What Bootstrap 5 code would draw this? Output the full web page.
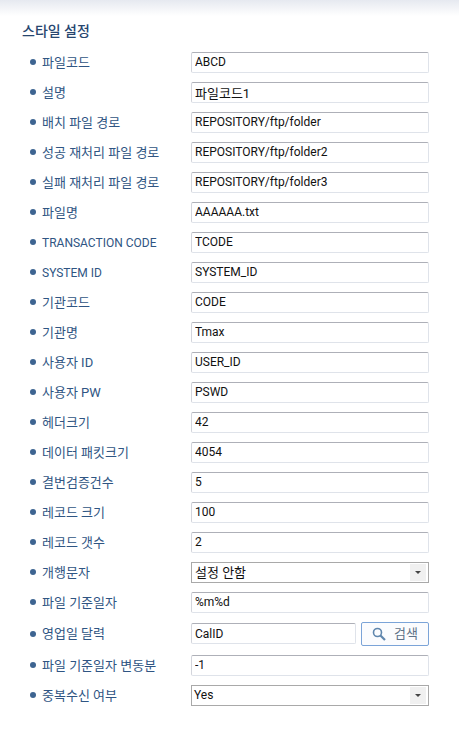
<!DOCTYPE html>
<html lang="ko">
<head>
<meta charset="utf-8">
<title>스타일 설정</title>
<link href="https://cdn.jsdelivr.net/npm/bootstrap@5.3.0/dist/css/bootstrap.min.css" rel="stylesheet">
<style>
html,body{height:100%;}
body{background:#fff;font-family:Roboto,"Noto Sans CJK KR",sans-serif;font-size:13px;overflow:hidden;}
.top-shade{height:16px;background:linear-gradient(#e6e9f0,#fff);}
.panel-head{margin:7px 0 0 22px;height:24px;line-height:17px;font-size:14px;font-weight:500;color:#27466f;}
.set-list{margin:0;padding:0 30px;list-style:none;}
.set-row{height:30px;display:flex;align-items:center;}
.set-row-tall{height:33px;}
.dot{width:6px;height:6px;border-radius:50%;background:#3d6491;flex:none;margin-right:6px;}
.set-label{width:149px;flex:none;color:#2f5583;font-size:13px;line-height:20px;padding-top:1px;white-space:nowrap;}
.set-label-latin{font-size:12px;}
.field{height:21px;min-height:21px;width:238px;padding:0 3px;border:1px solid #dfe3ea;border-top-color:#aeb0b8;border-left-color:#d3d5dc;border-radius:2px;font-family:Roboto,"Noto Sans CJK KR",sans-serif;font-size:12px;line-height:19px;color:#111;box-shadow:none;}
.field-ko{font-size:13px;}
.chooser{width:239px;height:21px;border:1px solid #a9a9a9;border-radius:0;padding:0 3px;font-size:13px;line-height:19px;color:#111;background:#fff;}
.chooser-latin{font-size:12px;padding-left:2px;}
.chooser-arrow{width:16px;height:17px;background:#f0f0f0;flex:none;margin-right:-1px;display:flex;align-items:center;justify-content:center;}
.tri{width:0;height:0;border-left:3px solid transparent;border-right:3px solid transparent;border-top:3px solid #444;}
.field-short{width:165px;}
.find-btn{width:68px;height:24px;margin-left:5px;padding:0;border:1px solid #7ba4d8;border-radius:2px;background:#fbfcfe;color:#5f7388;font-size:13px;line-height:20px;}
.find-btn:hover{background:#fbfcfe;color:#5f7388;border-color:#7ba4d8;}
</style>
</head>
<body>
<div class="top-shade"></div>
<div class="panel-head">스타일 설정</div>
<ul class="set-list">
<li class="set-row"><span class="dot"></span><span class="set-label">파일코드</span><input class="form-control field" value="ABCD"></li>
<li class="set-row"><span class="dot"></span><span class="set-label">설명</span><input class="form-control field field-ko" value="파일코드1"></li>
<li class="set-row"><span class="dot"></span><span class="set-label">배치 파일 경로</span><input class="form-control field" value="REPOSITORY/ftp/folder"></li>
<li class="set-row"><span class="dot"></span><span class="set-label">성공 재처리 파일 경로</span><input class="form-control field" value="REPOSITORY/ftp/folder2"></li>
<li class="set-row"><span class="dot"></span><span class="set-label">실패 재처리 파일 경로</span><input class="form-control field" value="REPOSITORY/ftp/folder3"></li>
<li class="set-row"><span class="dot"></span><span class="set-label">파일명</span><input class="form-control field" value="AAAAAA.txt"></li>
<li class="set-row"><span class="dot"></span><span class="set-label set-label-latin">TRANSACTION CODE</span><input class="form-control field" value="TCODE"></li>
<li class="set-row"><span class="dot"></span><span class="set-label set-label-latin">SYSTEM ID</span><input class="form-control field" value="SYSTEM_ID"></li>
<li class="set-row"><span class="dot"></span><span class="set-label">기관코드</span><input class="form-control field" value="CODE"></li>
<li class="set-row"><span class="dot"></span><span class="set-label">기관명</span><input class="form-control field" value="Tmax"></li>
<li class="set-row"><span class="dot"></span><span class="set-label">사용자 ID</span><input class="form-control field" value="USER_ID"></li>
<li class="set-row"><span class="dot"></span><span class="set-label">사용자 PW</span><input class="form-control field" value="PSWD"></li>
<li class="set-row"><span class="dot"></span><span class="set-label">헤더크기</span><input class="form-control field" value="42"></li>
<li class="set-row"><span class="dot"></span><span class="set-label">데이터 패킷크기</span><input class="form-control field" value="4054"></li>
<li class="set-row"><span class="dot"></span><span class="set-label">결번검증건수</span><input class="form-control field" value="5"></li>
<li class="set-row"><span class="dot"></span><span class="set-label">레코드 크기</span><input class="form-control field" value="100"></li>
<li class="set-row"><span class="dot"></span><span class="set-label">레코드 갯수</span><input class="form-control field" value="2"></li>
<li class="set-row"><span class="dot"></span><span class="set-label">개행문자</span><div class="chooser d-flex align-items-center justify-content-between"><span>설정 안함</span><span class="chooser-arrow"><span class="tri"></span></span></div></li>
<li class="set-row"><span class="dot"></span><span class="set-label">파일 기준일자</span><input class="form-control field" value="%m%d"></li>
<li class="set-row set-row-tall"><span class="dot"></span><span class="set-label">영업일 달력</span><input class="form-control field field-short" value="CalID"><button type="button" class="btn find-btn d-flex align-items-center justify-content-center gap-2"><svg width="14" height="14" viewBox="0 0 14 14" fill="none" stroke="#5f86ad"><circle cx="5.5" cy="5.5" r="4" stroke-width="1.6"/><path d="M8.5 8.5 13 13" stroke-width="2.2"/></svg><span>검색</span></button></li>
<li class="set-row"><span class="dot"></span><span class="set-label">파일 기준일자 변동분</span><input class="form-control field" value="-1"></li>
<li class="set-row"><span class="dot"></span><span class="set-label">중복수신 여부</span><div class="chooser chooser-latin d-flex align-items-center justify-content-between"><span>Yes</span><span class="chooser-arrow"><span class="tri"></span></span></div></li>
</ul>
<script src="https://cdn.jsdelivr.net/npm/bootstrap@5.3.0/dist/js/bootstrap.bundle.min.js"></script>
</body>
</html>
